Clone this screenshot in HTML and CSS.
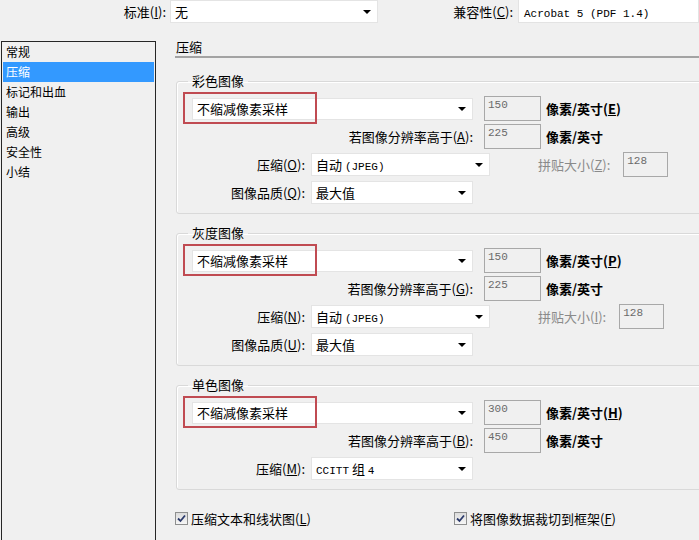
FILE: index.html
```html
<!DOCTYPE html>
<html lang="zh-CN">
<head>
    <meta charset="UTF-8">
    <title>压缩</title>
    <link rel="stylesheet" href="styles.css">
</head>
<body>
    <div class="topbar">
        <label class="top-label std">标准(<u>I</u>):</label>
        <div class="select top-select"><span>无</span><i class="arrow"></i></div>
        <label class="top-label compat">兼容性(<u>C</u>):</label>
        <div class="compat-field"><span class="lat">Acrobat 5 (PDF 1.4)</span></div>
    </div>

    <div class="layout">
        <ul class="nav">
            <li>常规</li>
            <li class="active">压缩</li>
            <li>标记和出血</li>
            <li>输出</li>
            <li>高级</li>
            <li>安全性</li>
            <li>小结</li>
        </ul>

        <div class="main">
            <div class="heading">压缩</div>

            <fieldset class="group">
                <legend>彩色图像</legend>
                <div class="row">
                    <div class="select sample"><span>不缩减像素采样</span><i class="arrow"></i></div>
                    <div class="mark"></div>
                    <div class="num">150</div>
                    <span class="unit">像素/英寸(<u>E</u>)</span>
                </div>
                <div class="row">
                    <label class="label wide">若图像分辨率高于(<u>A</u>):</label>
                    <div class="num">225</div>
                    <span class="unit">像素/英寸</span>
                </div>
                <div class="row">
                    <label class="label">压缩(<u>O</u>):</label>
                    <div class="select comp"><span>自动 <span class="lat">(JPEG)</span></span><i class="arrow"></i></div>
                    <label class="tile-label">拼贴大小(<u>Z</u>):</label>
                    <div class="num tile">128</div>
                </div>
                <div class="row">
                    <label class="label">图像品质(<u>Q</u>):</label>
                    <div class="select qual"><span>最大值</span><i class="arrow"></i></div>
                </div>
            </fieldset>

            <fieldset class="group">
                <legend>灰度图像</legend>
                <div class="row">
                    <div class="select sample"><span>不缩减像素采样</span><i class="arrow"></i></div>
                    <div class="mark"></div>
                    <div class="num">150</div>
                    <span class="unit">像素/英寸(<u>P</u>)</span>
                </div>
                <div class="row">
                    <label class="label wide">若图像分辨率高于(<u>G</u>):</label>
                    <div class="num">225</div>
                    <span class="unit">像素/英寸</span>
                </div>
                <div class="row">
                    <label class="label">压缩(<u>N</u>):</label>
                    <div class="select comp"><span>自动 <span class="lat">(JPEG)</span></span><i class="arrow"></i></div>
                    <label class="tile-label">拼贴大小(<u>I</u>):</label>
                    <div class="num tile">128</div>
                </div>
                <div class="row">
                    <label class="label">图像品质(<u>U</u>):</label>
                    <div class="select qual"><span>最大值</span><i class="arrow"></i></div>
                </div>
            </fieldset>

            <fieldset class="group">
                <legend>单色图像</legend>
                <div class="row">
                    <div class="select sample"><span>不缩减像素采样</span><i class="arrow"></i></div>
                    <div class="mark"></div>
                    <div class="num">300</div>
                    <span class="unit">像素/英寸(<u>H</u>)</span>
                </div>
                <div class="row">
                    <label class="label wide">若图像分辨率高于(<u>B</u>):</label>
                    <div class="num">450</div>
                    <span class="unit">像素/英寸</span>
                </div>
                <div class="row">
                    <label class="label">压缩(<u>M</u>):</label>
                    <div class="select qual"><span><span class="lat">CCITT</span> 组 <span class="lat">4</span></span><i class="arrow"></i></div>
                </div>
            </fieldset>

            <div class="checks">
                <label class="check first"><i class="box"><svg width="9" height="9" viewBox="0 0 9 9"><path d="M1 4.5 L3.5 7 L8 1.5" fill="none" stroke="#2b3a6b" stroke-width="1.8"/></svg></i>压缩文本和线状图(<u>L</u>)</label>
                <label class="check"><i class="box"><svg width="9" height="9" viewBox="0 0 9 9"><path d="M1 4.5 L3.5 7 L8 1.5" fill="none" stroke="#2b3a6b" stroke-width="1.8"/></svg></i>将图像数据裁切到框架(<u>F</u>)</label>
            </div>
        </div>
    </div>
</body>
</html>
```

FILE: styles.css
```css
body {
    margin: 0;
    background: #f0f0f0;
    color: #000;
    font-family: "Noto Sans CJK SC", sans-serif;
    font-size: 13px;
    width: 699px;
    height: 540px;
    overflow: hidden;
}
u {
    text-decoration: underline;
}
.lat {
    font-family: "Liberation Mono", monospace;
    font-size: 11px;
}

/* top bar */
.topbar {
    display: flex;
    height: 23px;
    line-height: 23px;
}
.top-label {
    text-align: right;
    box-sizing: border-box;
    flex: none;
}
.std {
    width: 166px;
    margin-right: 4px;
}
.compat {
    width: 135px;
    margin-right: 5px;
}
.top-select {
    width: 208px;
    height: 23px;
    border-top: none;
    flex: none;
}
.compat-field {
    flex: 1;
    background: #fff;
    border: 1px solid #e3e3e3;
    border-top: none;
    padding-left: 5px;
}

/* layout */
.layout {
    display: flex;
    align-items: flex-start;
    margin-top: 14px;
}
.nav {
    flex: none;
    list-style: none;
    margin: 4px 0 0 1px;
    padding: 0 1px;
    width: 155px;
    height: 520px;
    box-sizing: border-box;
    border: 1px solid #262626;
    font-size: 12px;
}
.nav li {
    line-height: 20px;
    height: 20px;
    padding-left: 3px;
}
.nav li.active {
    background: #3399ff;
    color: #fff;
}
.main {
    flex: none;
    margin-left: 19px;
    width: 524px;
    overflow-x: clip;
    overflow-y: visible;
}
.heading {
    line-height: 19px;
    height: 19px;
    border-bottom: 2px solid #a3a3a3;
    padding-left: 1px;
}

/* group boxes */
.group {
    margin: 16px 0 0 1px;
    padding: 8px 0 8px 15px;
    border: 1px solid #d9d9d9;
    border-radius: 3px;
    box-shadow: inset 1px 1px 0 #fff;
    width: 560px;
    min-width: 0;
    display: flex;
    flex-direction: column;
    gap: 3px;
}
.group + .group {
    margin-top: 12px;
}
.group legend {
    line-height: 14px;
    padding: 0 4px;
    margin-left: -4px;
}
.row {
    position: relative;
    display: flex;
    align-items: center;
    height: 25px;
}

/* controls */
.select {
    flex: none;
    display: flex;
    align-items: center;
    height: 23px;
    box-sizing: border-box;
    background: #fff;
    border: 1px solid #e4e4e4;
    padding: 0 6px 0 4px;
}
.select > span {
    flex: 1;
    white-space: nowrap;
}
.arrow {
    width: 0;
    height: 0;
    border-left: 4px solid transparent;
    border-right: 4px solid transparent;
    border-top: 4px solid #000;
}
.sample {
    width: 281px;
    height: 22px;
}
.comp {
    width: 179px;
}
.qual {
    width: 162px;
}
.label {
    flex: none;
    width: 113px;
    margin-right: 6px;
    text-align: right;
    white-space: nowrap;
}
.label.wide {
    width: 281px;
    margin-right: 0;
}
.num {
    flex: none;
    width: 57px;
    height: 25px;
    box-sizing: border-box;
    margin-left: 11px;
    border: 1px solid #a8a8a8;
    color: #6a6a6a;
    font-family: "Liberation Mono", monospace;
    font-size: 11px;
    line-height: 13px;
    padding: 2px 3px;
    align-self: flex-start;
}
.num.tile {
    width: 45px;
    margin-left: 13px;
}
.unit {
    margin-left: 5px;
    font-weight: bold;
    white-space: nowrap;
}
.tile-label {
    margin-left: 48px;
    color: #8a8a8a;
    white-space: nowrap;
}
.mark {
    position: absolute;
    left: -9px;
    top: -4px;
    width: 134px;
    height: 32px;
    box-sizing: border-box;
    border: 2px solid #c04b52;
}

/* checkboxes */
.checks {
    display: flex;
    margin-top: 19px;
    line-height: 19px;
}
.check {
    display: flex;
    align-items: center;
    white-space: nowrap;
}
.check.first {
    width: 279px;
}
.box {
    display: flex;
    align-items: center;
    justify-content: center;
    width: 13px;
    height: 13px;
    box-sizing: border-box;
    border: 1px solid #8e8f8f;
    background: linear-gradient(#dcdcdc, #f6f6f6);
    margin-right: 3px;
}
```
